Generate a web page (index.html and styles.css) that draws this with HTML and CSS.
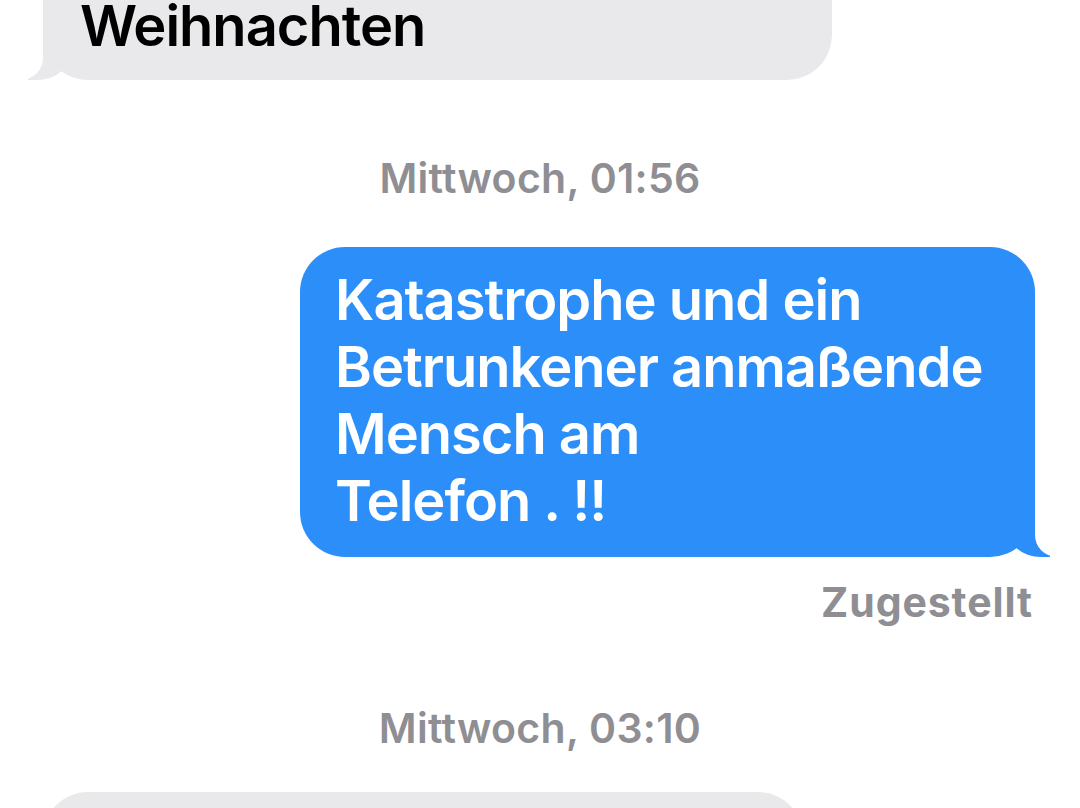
FILE: index.html
```html
<!DOCTYPE html>
<html lang="de">
<head>
    <meta charset="UTF-8">
    <meta name="viewport" content="width=device-width, initial-scale=1.0">
    <title>Nachrichten</title>
    <link rel="stylesheet" href="styles.css">
</head>
<body>
    <div class="thread">
        <div class="bubble them first">Weihnachten</div>

        <div class="stamp stamp-one">Mittwoch, 01:56</div>

        <div class="bubble me">Katastrophe und ein<br>Betrunkener anmaßende<br>Mensch am<br>Telefon . !!</div>
        <div class="status">Zugestellt</div>

        <div class="stamp stamp-two">Mittwoch, 03:10</div>

        <div class="bubble them last"></div>
    </div>
</body>
</html>
```

FILE: styles.css
```css
body {
    margin: 0;
    background: #ffffff;
    font-family: Inter, "Noto Sans", sans-serif;
    height: 808px;
    overflow: hidden;
}
.thread {
    display: flex;
    flex-direction: column;
}
.bubble {
    position: relative;
    box-sizing: border-box;
    border-radius: 45px;
    font-size: 56px;
    font-weight: 600;
    line-height: 67px;
    letter-spacing: -1px;
    white-space: nowrap;
}
.bubble.them {
    align-self: flex-start;
    margin-left: 43px;
    background: #e9e9eb;
    color: #000000;
    padding: 20px 37px;
}
.bubble.me {
    align-self: flex-end;
    margin-right: 45px;
    width: 735px;
    margin-top: 44px;
    background: #2c8ff9;
    color: #ffffff;
    padding: 20px 35px 22px 35px;
}
.bubble.them::before,
.bubble.them::after,
.bubble.me::before,
.bubble.me::after {
    content: "";
    position: absolute;
    bottom: 0;
    height: 55px;
}
.bubble.them::before {
    left: -15px;
    width: 44px;
    background: #e9e9eb;
    border-bottom-right-radius: 35px 31px;
}
.bubble.them::after {
    left: -57px;
    width: 57px;
    background: #ffffff;
    border-bottom-right-radius: 22px;
}
.bubble.me::before {
    right: -15px;
    width: 44px;
    background: #2c8ff9;
    border-bottom-left-radius: 35px 31px;
}
.bubble.me::after {
    right: -57px;
    width: 57px;
    background: #ffffff;
    border-bottom-left-radius: 22px;
}
/* top of this bubble is scrolled out of view */
.bubble.first {
    width: 789px;
    padding-top: 0;
    padding-bottom: 27px;
    line-height: 53px;
    border-top-left-radius: 0;
    border-top-right-radius: 0;
}
.bubble.last {
    width: 760px;
    height: 120px;
    margin-top: 39px;
}
.stamp {
    text-align: center;
    color: #8e8e93;
    font-size: 41px;
    font-weight: 600;
    line-height: 50px;
    letter-spacing: 0.3px;
}
.stamp-one {
    margin-top: 73px;
}
.stamp-two {
    margin-top: 76px;
}
.status {
    align-self: flex-end;
    margin-right: 47px;
    margin-top: 20px;
    color: #8e8e93;
    font-size: 41px;
    font-weight: 700;
    line-height: 50px;
    letter-spacing: 0.9px;
}
```
